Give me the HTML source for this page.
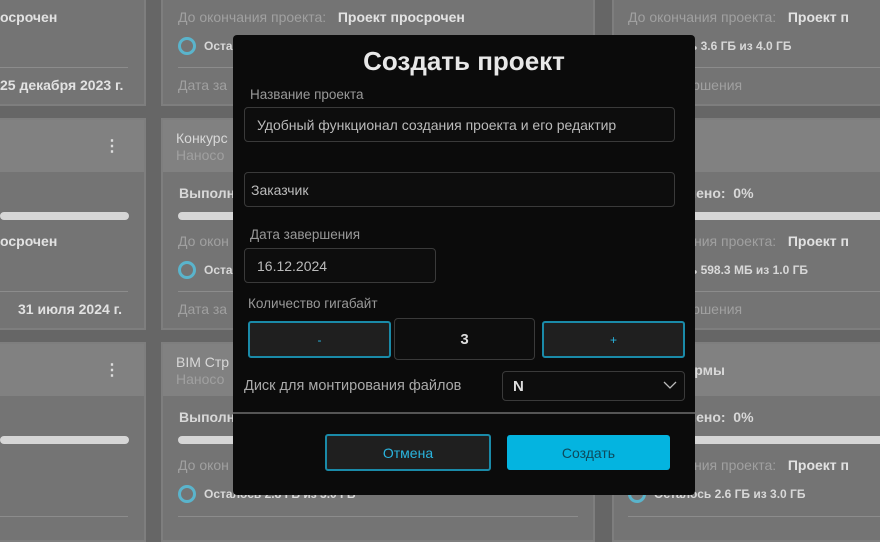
<!DOCTYPE html>
<html><head><meta charset="utf-8"><style>
*{box-sizing:border-box;margin:0;padding:0}
body{width:880px;height:528px;overflow:hidden;background:#666;font-family:"Liberation Sans",sans-serif;position:relative}
.a{position:absolute;white-space:nowrap}
.card{position:absolute;background:#747474;border:2px solid #7e7e7e}
.hd{position:absolute;background:#818181}
.t{color:#a0a0a0;font-size:14px}
.b{color:#e2e2e2;font-size:14px;font-weight:bold}
.w{color:#d8d8d8;font-size:14px}
.line{position:absolute;height:1px;background:#8c8c8c}
.bar{position:absolute;height:8px;border-radius:4px;background:#d6d6d6}
.ring{position:absolute;width:18px;height:18px;border-radius:50%;border:3px solid #5ab4cc}
.sm{font-size:12px;color:#d8d8d8;font-weight:bold}
.dots{position:absolute;color:#ddd;font-size:16px;font-weight:bold}
.m{position:absolute;left:233px;top:35px;width:462px;height:460px;background:#0b0b0b;border-radius:4px}
.inp{position:absolute;border:1px solid #3a3a3a;border-radius:4px;background:#0d0d0d;color:#bbb;font-size:14px;padding-left:10px;display:flex;align-items:center;overflow:hidden;white-space:nowrap}
.lbl{position:absolute;color:#999;font-size:13.5px;white-space:nowrap}
.btn{position:absolute;border:2px solid #1a8aa8;border-radius:3px;background:#1f1f1f;color:#2ab4de;font-size:14px;display:flex;align-items:center;justify-content:center}
</style></head><body>
<div class="card" style="left:-10px;top:-10px;width:156px;height:116px"></div>
<div class="a b" style="left:0;top:9px">осрочен</div>
<div class="line" style="left:0;top:67px;width:128px"></div>
<div class="a b" style="left:0;top:77px">25 декабря 2023 г.</div>
<div class="card" style="left:-10px;top:118px;width:156px;height:212px"></div>
<div class="hd" style="left:-8px;top:120px;width:152px;height:52px"></div>
<div class="dots" style="left:104px;top:136px">⋮</div>
<div class="bar" style="left:0;top:212px;width:129px"></div>
<div class="a b" style="left:0;top:233px">осрочен</div>
<div class="line" style="left:0;top:291px;width:128px"></div>
<div class="a b" style="left:18px;top:301px">31 июля 2024 г.</div>
<div class="card" style="left:-10px;top:342px;width:156px;height:200px"></div>
<div class="hd" style="left:-8px;top:344px;width:152px;height:52px"></div>
<div class="dots" style="left:104px;top:360px">⋮</div>
<div class="bar" style="left:0;top:436px;width:129px"></div>
<div class="line" style="left:0;top:516px;width:128px"></div>
<div class="card" style="left:161px;top:-10px;width:434px;height:116px"></div>
<div class="a t" style="left:178px;top:9px">До окончания проекта:&nbsp;&nbsp; <span class="b">Проект просрочен</span></div>
<div class="ring" style="left:178px;top:37px"></div>
<div class="a sm" style="left:204px;top:39px">Оста</div>
<div class="line" style="left:178px;top:67px;width:400px"></div>
<div class="a t" style="left:178px;top:77px">Дата за</div>
<div class="card" style="left:161px;top:118px;width:434px;height:212px"></div>
<div class="hd" style="left:163px;top:120px;width:430px;height:52px"></div>
<div class="a w" style="left:176px;top:130px">Конкурс</div>
<div class="a t" style="left:176px;top:147px">Наносо</div>
<div class="a w" style="left:179px;top:185px;font-weight:bold">Выполн</div>
<div class="bar" style="left:178px;top:212px;width:60px"></div>
<div class="a t" style="left:178px;top:233px">До окон</div>
<div class="ring" style="left:178px;top:261px"></div>
<div class="a sm" style="left:204px;top:263px">Оста</div>
<div class="line" style="left:178px;top:291px;width:400px"></div>
<div class="a t" style="left:178px;top:301px">Дата за</div>
<div class="card" style="left:161px;top:342px;width:434px;height:200px"></div>
<div class="hd" style="left:163px;top:344px;width:430px;height:52px"></div>
<div class="a w" style="left:176px;top:354px">BIM Стр</div>
<div class="a t" style="left:176px;top:371px">Наносо</div>
<div class="a w" style="left:179px;top:409px;font-weight:bold">Выполн</div>
<div class="bar" style="left:178px;top:436px;width:60px"></div>
<div class="a t" style="left:178px;top:457px">До окон</div>
<div class="ring" style="left:178px;top:485px"></div>
<div class="a sm" style="left:204px;top:487px">Осталось 2.8 ГБ из 3.0 ГБ</div>
<div class="line" style="left:178px;top:516px;width:400px"></div>
<div class="card" style="left:612px;top:-10px;width:280px;height:116px"></div>
<div class="a t" style="left:628px;top:9px">До окончания проекта:&nbsp;&nbsp; <span class="b">Проект п</span></div>
<div class="a sm" style="left:640px;top:39px">Осталось 3.6 ГБ из 4.0 ГБ</div>
<div class="line" style="left:628px;top:67px;width:260px"></div>
<div class="a t" style="left:628px;top:77px">Дата завершения</div>
<div class="card" style="left:612px;top:118px;width:280px;height:212px"></div>
<div class="hd" style="left:614px;top:120px;width:270px;height:52px"></div>
<div class="a w" style="left:640px;top:138px;font-weight:bold">Проект</div>
<div class="a w" style="left:640px;top:185px;font-weight:bold">Выполнено:&nbsp; 0%</div>
<div class="bar" style="left:628px;top:212px;width:260px;border-radius:0"></div>
<div class="a t" style="left:628px;top:233px">До окончания проекта:&nbsp;&nbsp; <span class="b">Проект п</span></div>
<div class="a sm" style="left:640px;top:263px">Осталось 598.3 МБ из 1.0 ГБ</div>
<div class="line" style="left:628px;top:291px;width:260px"></div>
<div class="a t" style="left:628px;top:301px">Дата завершения</div>
<div class="card" style="left:612px;top:342px;width:280px;height:200px"></div>
<div class="hd" style="left:614px;top:344px;width:270px;height:52px"></div>
<div class="a w" style="left:640px;top:362px;font-weight:bold">Платформы</div>
<div class="a w" style="left:640px;top:409px;font-weight:bold">Выполнено:&nbsp; 0%</div>
<div class="bar" style="left:628px;top:436px;width:260px;border-radius:0"></div>
<div class="a t" style="left:628px;top:457px">До окончания проекта:&nbsp;&nbsp; <span class="b">Проект п</span></div>
<div class="ring" style="left:628px;top:485px"></div>
<div class="a sm" style="left:654px;top:487px">Осталось 2.6 ГБ из 3.0 ГБ</div>
<div class="line" style="left:628px;top:516px;width:260px"></div>
<div class="m">
<div class="a" style="left:0;width:462px;text-align:center;top:11px;color:#e8e8e8;font-size:26px;font-weight:bold">Создать проект</div>
<div class="lbl" style="left:17px;top:52px">Название проекта</div>
<div class="inp" style="left:11px;top:72px;width:431px;height:35px;padding-left:12px">Удобный функционал создания проекта и его редактир</div>
<div class="inp" style="left:11px;top:137px;width:431px;height:35px;padding-left:6px">Заказчик</div>
<div class="lbl" style="left:17px;top:192px">Дата завершения</div>
<div class="inp" style="left:11px;top:213px;width:192px;height:35px;padding-left:12px">16.12.2024</div>
<div class="lbl" style="left:15px;top:261px">Количество гигабайт</div>
<div class="btn" style="left:15px;top:286px;width:143px;height:37px;font-size:12px">-</div>
<div class="inp" style="left:161px;top:283px;width:141px;height:42px;justify-content:center;padding:0;color:#ddd;font-weight:bold;font-size:15px">3</div>
<div class="btn" style="left:309px;top:286px;width:143px;height:37px;font-size:12px">+</div>
<div class="lbl" style="left:11px;top:343px;font-size:14.5px;color:#aaa">Диск для монтирования файлов</div>
<div class="inp" style="left:269px;top:336px;width:183px;height:30px;color:#ddd;font-weight:bold;font-size:15px">N</div>
<svg class="a" style="left:430px;top:346px" width="14" height="8"><path d="M1 1 L7 7 L13 1" stroke="#bbb" fill="none" stroke-width="1.3"/></svg>
<div style="position:absolute;left:0;top:377px;width:462px;height:2px;background:#555"></div>
<div class="btn" style="left:92px;top:399px;width:166px;height:37px">Отмена</div>
<div class="btn" style="left:274px;top:400px;width:163px;height:35px;background:#04b4e0;border:none;color:#0d4a5c">Создать</div>
</div>
</body></html>
